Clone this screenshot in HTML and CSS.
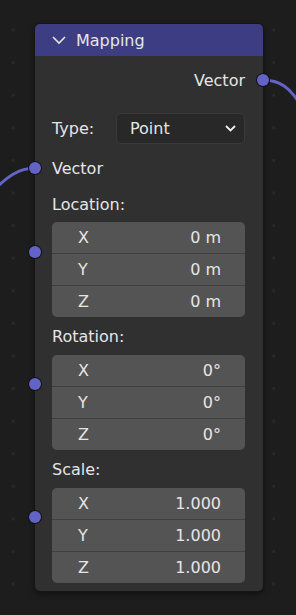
FILE: index.html
```html
<!DOCTYPE html>
<html lang="en">
<head>
    <meta charset="UTF-8">
    <meta name="viewport" content="width=device-width, initial-scale=1.0">
    <title>Mapping Node</title>
    <link rel="stylesheet" href="styles.css">
</head>
<body>
    <svg class="links" width="296" height="615" viewBox="0 0 296 615">
        <path d="M263 80 C 280 80, 290 88, 300 104" />
        <path d="M-6 190 C 6 178, 18 168, 35 168" />
    </svg>

    <div class="node">
        <div class="node-header">
            <svg class="chevron" width="14" height="9" viewBox="0 0 14 9"><path d="M1 1 L7 7 L13 1" /></svg>
            <span>Mapping</span>
        </div>
        <div class="node-body">
            <div class="row output-row">
                <span>Vector</span>
                <span class="socket socket-out"></span>
            </div>

            <div class="row type-row">
                <span class="type-label">Type:</span>
                <div class="dropdown">
                    <span>Point</span>
                    <svg width="11" height="7" viewBox="0 0 11 7"><path d="M1 1 L5.5 5.5 L10 1" /></svg>
                </div>
            </div>

            <div class="row input-row">
                <span class="socket socket-in"></span>
                <span>Vector</span>
            </div>

            <div class="vector-block">
                <span class="socket socket-in"></span>
                <div class="block-label">Location:</div>
                <div class="field-group">
                    <div class="field"><span>X</span><span>0 m</span></div>
                    <div class="field"><span>Y</span><span>0 m</span></div>
                    <div class="field"><span>Z</span><span>0 m</span></div>
                </div>
            </div>

            <div class="vector-block">
                <span class="socket socket-in"></span>
                <div class="block-label tall">Rotation:</div>
                <div class="field-group">
                    <div class="field"><span>X</span><span>0°</span></div>
                    <div class="field"><span>Y</span><span>0°</span></div>
                    <div class="field"><span>Z</span><span>0°</span></div>
                </div>
            </div>

            <div class="vector-block">
                <span class="socket socket-in"></span>
                <div class="block-label tall">Scale:</div>
                <div class="field-group">
                    <div class="field"><span>X</span><span>1.000</span></div>
                    <div class="field"><span>Y</span><span>1.000</span></div>
                    <div class="field"><span>Z</span><span>1.000</span></div>
                </div>
            </div>
        </div>
    </div>
</body>
</html>
```

FILE: styles.css
```css
:root {
    --bg-color: #1d1d1d;
    --dot-color: #2a2a2a;
    --node-color: #303030;
    --header-color: #3d3d84;
    --field-color: #545454;
    --field-line: #3f3f3f;
    --socket-color: #6363c7;
    --text-color: #e5e5e5;
    --font-main: 'DejaVu Sans', sans-serif;
}
* { box-sizing: border-box; }
body {
    margin: 0;
    width: 296px;
    height: 615px;
    overflow: hidden;
    position: relative;
    font-family: var(--font-main);
    font-size: 16px;
    color: var(--text-color);
    background-color: var(--bg-color);
    background-image: radial-gradient(circle, var(--dot-color) 1.2px, transparent 1.8px);
    background-size: 32.6px 32.6px;
    background-position: -3.3px 13.7px;
}
.links { position: absolute; top: 0; left: 0; }
.links path { fill: none; stroke: var(--socket-color); stroke-width: 3; }

.node {
    position: relative;
    margin: 24px 0 0 35px;
    width: 228px;
    background-color: var(--node-color);
    border-radius: 5px;
    box-shadow: 0 0 0 1px #151515, 0 3px 6px rgba(0,0,0,0.45);
}
.node-header {
    height: 32px;
    background-color: var(--header-color);
    border-radius: 5px 5px 0 0;
    display: flex;
    align-items: center;
    padding-left: 17px;
    gap: 10px;
}
.chevron path { fill: none; stroke: var(--text-color); stroke-width: 1.6; }
.node-body { padding: 6px 18px 8px 17px; }

.row { display: flex; align-items: center; position: relative; }
.output-row { height: 36px; justify-content: flex-end; }
.type-row { height: 31px; margin-top: 15px; }
.type-label { width: 64px; }
.dropdown {
    flex: 1;
    height: 31px;
    display: flex;
    align-items: center;
    justify-content: space-between;
    padding: 0 8px 0 13px;
    background-color: #282828;
    border: 1px solid #3a3a3a;
    border-radius: 5px;
}
.dropdown path { fill: none; stroke: #f0f0f0; stroke-width: 1.8; }
.input-row { height: 36px; margin-top: 6px; }

.socket {
    position: absolute;
    width: 12px;
    height: 12px;
    border-radius: 50%;
    background-color: var(--socket-color);
    box-shadow: 0 0 0 1px #111;
}
.socket-out { right: -24px; top: 12px; }
.socket-in { left: -23px; top: 12px; }

.vector-block { position: relative; }
.vector-block .socket-in { top: 50%; margin-top: -6px; }
.block-label { height: 36px; display: flex; align-items: center; }
.block-label.tall { height: 38px; }

.field-group {
    background-color: var(--field-color);
    border-radius: 5px;
    overflow: hidden;
}
.field {
    height: 31px;
    display: flex;
    align-items: center;
    justify-content: space-between;
    padding: 0 24px 0 26px;
}
.field + .field { height: 32px; border-top: 1px solid var(--field-line); }
```
